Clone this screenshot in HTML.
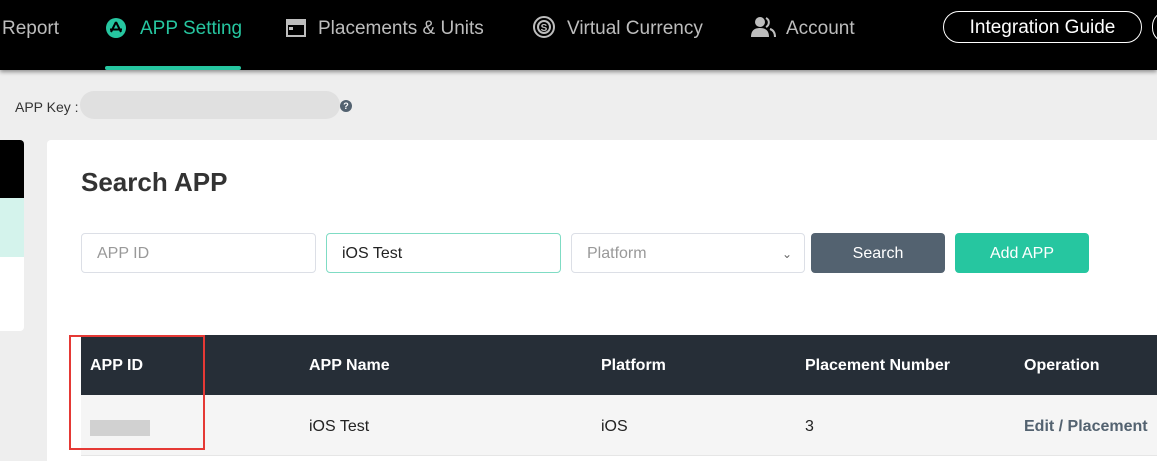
<!DOCTYPE html>
<html><head><style>
*{margin:0;padding:0;box-sizing:border-box}
html,body{width:1157px;height:461px;overflow:hidden}
body{background:#eeeeee;font-family:"Liberation Sans",sans-serif;position:relative}
.a{position:absolute}
.nav{left:0;top:0;width:1157px;height:70px;background:#000;box-shadow:0 2px 4px rgba(0,0,0,.4)}
.ni{top:18px;font-size:19px;color:#bdbdbd;white-space:nowrap}
.inp{top:233px;height:40px;border:1px solid #dcdfe6;border-radius:4px;background:#fff;font-size:16px;line-height:40px;padding-left:15px;color:#999}
.btn{top:233px;height:40px;border-radius:4px;color:#fff;font-size:16px;text-align:center;line-height:42px}
.th{top:357px;color:#fff;font-weight:bold;font-size:16px}
.td{top:418px;color:#222;font-size:16px}
</style></head><body>
<div class="a nav"></div>
<div class="a ni" style="left:2px">Report</div>
<svg class="a" style="left:105px;top:17px" width="22" height="22" viewBox="0 0 22 22"><circle cx="11" cy="11" r="10" fill="#26c6a0"/><path d="M11 5L6 15M11 5L16 15M5 12.5H17" stroke="#000" stroke-width="2" fill="none"/></svg>
<div class="a ni" style="left:140px;color:#26c6a0">APP Setting</div>
<div class="a" style="left:105px;top:66px;width:136px;height:4px;background:#26c6a0;border-radius:2px"></div>
<svg class="a" style="left:286px;top:19px" width="20" height="18" viewBox="0 0 20 18"><rect x="1" y="1" width="18" height="16" fill="none" stroke="#bdbdbd" stroke-width="2"/><rect x="1" y="1" width="18" height="5" fill="#bdbdbd"/><rect x="3" y="8" width="4" height="3" fill="#bdbdbd"/></svg>
<div class="a ni" style="left:318px">Placements &amp; Units</div>
<svg class="a" style="left:532px;top:15px" width="24" height="24" viewBox="0 0 24 24"><circle cx="12" cy="12" r="10" fill="none" stroke="#bdbdbd" stroke-width="2"/><circle cx="12" cy="12" r="6" fill="none" stroke="#bdbdbd" stroke-width="2"/><text x="12" y="16" font-size="10" font-weight="bold" fill="#bdbdbd" text-anchor="middle" font-family="Liberation Sans">S</text></svg>
<div class="a ni" style="left:567px">Virtual Currency</div>
<svg class="a" style="left:750px;top:16px" width="26" height="22" viewBox="0 0 26 22"><circle cx="10" cy="6" r="5" fill="#bdbdbd"/><path d="M1 21C1 14 5 12 10 12S19 14 19 21Z" fill="#bdbdbd"/><path d="M16 2A5 5 0 0 1 16 11M20 13C23 14 25 16 25 21" stroke="#bdbdbd" stroke-width="2" fill="none"/></svg>
<div class="a ni" style="left:786px">Account</div>
<div class="a" style="left:943px;top:11px;width:199px;height:32px;border:1.5px solid #fff;border-radius:16px;color:#fff;font-size:19px;text-align:center;line-height:31px">Integration Guide</div>
<div class="a" style="left:1152px;top:11px;width:30px;height:32px;border:1.5px solid #fff;border-radius:16px"></div>
<div class="a" style="left:15px;top:99px;font-size:14px;color:#333">APP Key :</div>
<div class="a" style="left:80px;top:91px;width:260px;height:28px;background:#dcdcdc;border-radius:14px;opacity:.8"></div>
<div class="a" style="left:340px;top:100px;width:12px;height:12px;border-radius:50%;background:#536270;color:#fff;font-size:9px;text-align:center;line-height:12px;font-weight:bold">?</div>
<div class="a" style="left:-10px;top:140px;width:34px;height:191px;background:#fff;border-radius:4px;overflow:hidden"><div style="height:58px;background:#000"></div><div style="height:59px;background:#d4f3ec"></div></div>
<div class="a" style="left:47px;top:140px;width:1120px;height:330px;background:#fff;border-radius:4px"></div>
<div class="a" style="left:81px;top:167px;font-size:26px;font-weight:bold;color:#333">Search APP</div>
<div class="a inp" style="left:81px;width:235px">APP ID</div>
<div class="a inp" style="left:326px;width:235px;border-color:#7fdcc4;color:#222">iOS Test</div>
<div class="a inp" style="left:571px;width:234px">Platform<span style="position:absolute;right:12px;top:0;font-size:12px;color:#666">&#8964;</span></div>
<div class="a btn" style="left:811px;width:134px;background:#536270">Search</div>
<div class="a btn" style="left:955px;width:134px;background:#26c6a0">Add APP</div>
<div class="a" style="left:81px;top:335px;width:1076px;height:60px;background:#262e37"></div>
<div class="a" style="left:81px;top:395px;width:1076px;height:61px;background:#f5f5f5;border-bottom:1px solid #e6e6e6"></div>
<div class="a th" style="left:90px">APP ID</div>
<div class="a th" style="left:309px">APP Name</div>
<div class="a th" style="left:601px">Platform</div>
<div class="a th" style="left:805px">Placement Number</div>
<div class="a th" style="left:1024px">Operation</div>
<div class="a" style="left:90px;top:420px;width:60px;height:16px;background:#c8c8c8;opacity:.8"></div>
<div class="a td" style="left:309px">iOS Test</div>
<div class="a td" style="left:601px">iOS</div>
<div class="a td" style="left:805px">3</div>
<div class="a td" style="left:1024px;color:#536270;font-weight:bold">Edit / Placement</div>
<div class="a" style="left:69px;top:335px;width:136px;height:115px;border:2px solid #e53935"></div>
</body></html>
